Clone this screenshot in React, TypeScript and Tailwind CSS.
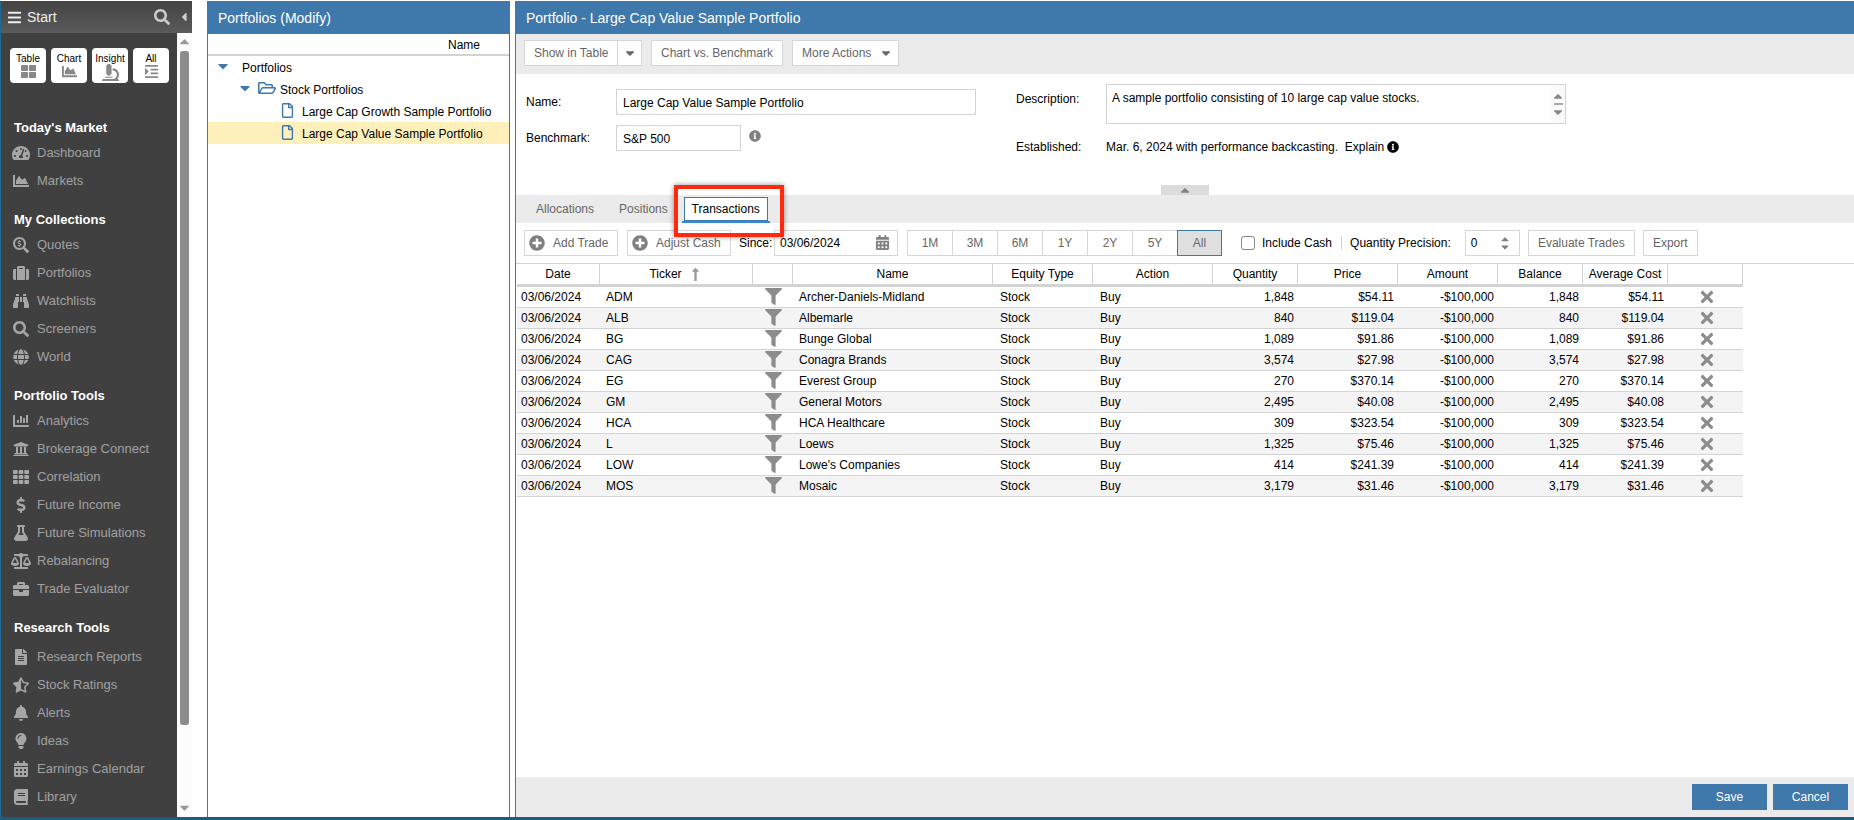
import React from "react";
import {
  FaBars, FaSearch, FaCaretLeft, FaCaretUp, FaCaretDown, FaThLarge, FaChartArea, FaMicroscope, FaIndent,
  FaTachometerAlt, FaSearchDollar, FaSuitcase, FaBinoculars, FaGlobe, FaChartBar, FaUniversity, FaTh,
  FaDollarSign, FaFlask, FaBalanceScale, FaBriefcase, FaFileAlt, FaStarHalfAlt, FaBell, FaLightbulb,
  FaCalendarAlt, FaBook, FaRegFolderOpen, FaRegFile, FaInfoCircle, FaPlusCircle, FaFilter, FaTimes, FaLongArrowAltUp,
} from "react-icons/fa";

const font = { fontFamily: '"Liberation Sans", Arial, sans-serif' };

type Item = { label: string; Icon: React.ComponentType<{ size?: number; className?: string }>; size?: number };
const sections: { title: string; extra?: boolean; items: Item[] }[] = [
  { title: "Today's Market", items: [{ label: "Dashboard", Icon: FaTachometerAlt, size: 18 }, { label: "Markets", Icon: FaChartArea }] },
  {
    title: "My Collections",
    items: [
      { label: "Quotes", Icon: FaSearchDollar },
      { label: "Portfolios", Icon: FaSuitcase },
      { label: "Watchlists", Icon: FaBinoculars },
      { label: "Screeners", Icon: FaSearch },
      { label: "World", Icon: FaGlobe },
    ],
  },
  {
    title: "Portfolio Tools",
    items: [
      { label: "Analytics", Icon: FaChartBar },
      { label: "Brokerage Connect", Icon: FaUniversity },
      { label: "Correlation", Icon: FaTh },
      { label: "Future Income", Icon: FaDollarSign },
      { label: "Future Simulations", Icon: FaFlask },
      { label: "Rebalancing", Icon: FaBalanceScale, size: 20 },
      { label: "Trade Evaluator", Icon: FaBriefcase },
    ],
  },
  {
    title: "Research Tools",
    extra: true,
    items: [
      { label: "Research Reports", Icon: FaFileAlt },
      { label: "Stock Ratings", Icon: FaStarHalfAlt },
      { label: "Alerts", Icon: FaBell },
      { label: "Ideas", Icon: FaLightbulb },
      { label: "Earnings Calendar", Icon: FaCalendarAlt },
      { label: "Library", Icon: FaBook },
    ],
  },
];

const quick: [string, React.ComponentType<{ size?: number; className?: string }>][] = [
  ["Table", FaThLarge],
  ["Chart", FaChartArea],
  ["Insight", FaMicroscope],
  ["All", FaIndent],
];

const rows = [
  ["ADM", "Archer-Daniels-Midland", "1,848", "$54.11"],
  ["ALB", "Albemarle", "840", "$119.04"],
  ["BG", "Bunge Global", "1,089", "$91.86"],
  ["CAG", "Conagra Brands", "3,574", "$27.98"],
  ["EG", "Everest Group", "270", "$370.14"],
  ["GM", "General Motors", "2,495", "$40.08"],
  ["HCA", "HCA Healthcare", "309", "$323.54"],
  ["L", "Loews", "1,325", "$75.46"],
  ["LOW", "Lowe's Companies", "414", "$241.39"],
  ["MOS", "Mosaic", "3,179", "$31.46"],
];

const gridCols = "grid grid-cols-[83px_153px_40px_200px_100px_120px_85px_100px_100px_85px_85px_75px] w-[1226px]";
const headers = ["Date", "Ticker", "", "Name", "Equity Type", "Action", "Quantity", "Price", "Amount", "Balance", "Average Cost", ""];

function Btn({ children, className = "" }: { children: React.ReactNode; className?: string }) {
  return (
    <div className={"h-[26px] border border-[#d6d6d6] bg-white text-[#666] flex items-center shrink-0 " + className}>{children}</div>
  );
}

export default function App() {
  return (
    <div style={font} className="relative w-[1854px] h-[820px] overflow-hidden bg-white text-[12px] text-[#1a1a1a] flex flex-col">
      <div className="flex flex-1 min-h-0 pt-px">
        {/* Sidebar */}
        <div className="w-[192px] shrink-0 flex flex-col border-l border-[#1d6a96]">
          <div className="h-[32px] shrink-0 flex items-center bg-gradient-to-b from-[#444] to-[#5a5a5a] text-white pl-[6px]">
            <FaBars size={15} className="text-[#eee]" />
            <span className="ml-[5px] text-[14px] text-[#eee]">Start</span>
            <FaSearch size={16} className="ml-auto text-[#ccc]" />
            <FaCaretLeft size={14} className="ml-[7px] mr-[1px] text-[#ccc]" />
          </div>
          <div className="flex flex-1 min-h-0">
            <div className="w-[176px] bg-[#404040] flex flex-col">
              <div className="flex gap-[5px] pl-[9px] pt-[15px] h-[70px] shrink-0">
                {quick.map(([label, Icon]) => (
                  <div key={label} className="w-[36px] h-[35px] bg-white rounded-[4px] flex flex-col items-center pt-[6px]">
                    <span className="text-[10px] leading-[10px] text-black">{label}</span>
                    <Icon size={label === "Insight" ? 17 : 15} className="text-[#888]" />
                  </div>
                ))}
              </div>
              {sections.map((s) => (
                <div key={s.title} className="flex flex-col">
                  <div className={"h-[22px] mt-[14px] flex items-center pl-[13px] text-[13px] font-bold text-white " + (s.extra ? "mb-1" : "")}>
                    {s.title}
                  </div>
                  {s.items.map(({ label, Icon, size }) => (
                    <div key={label} className="h-[28px] flex items-center text-[13px] text-[#a0a0a0]">
                      <span className="w-[36px] pl-[4px] flex justify-center shrink-0">
                        <Icon size={size ?? 16} className="text-[#a6a6a6]" />
                      </span>
                      <span>{label}</span>
                    </div>
                  ))}
                </div>
              ))}
            </div>
            <div className="w-[15px] bg-[#fcfcfc] flex flex-col items-center">
              <FaCaretUp size={15} className="text-[#999] mt-[1px]" />
              <div className="w-[9px] h-[674px] mt-[2px] rounded-[3px] bg-[#8c8c8c]" />
              <div className="flex-1" />
              <FaCaretDown size={15} className="text-[#999] mb-[2px]" />
            </div>
          </div>
        </div>

        <div className="w-[15px] shrink-0" />

        {/* Tree panel */}
        <div className="w-[303px] shrink-0 flex flex-col border-x border-[#3f78ab]">
          <div className="h-[33px] -mx-px bg-[#3f78ab] text-white text-[14px] flex items-center pl-[11px] pt-px shrink-0">Portfolios (Modify)</div>
          <div className="h-[22px] border-b-2 border-[#d3d3d3] flex items-center justify-end pr-[29px] pt-px text-black shrink-0">Name</div>
          <div className="h-[22px] flex items-center text-black">
            <FaCaretDown size={16} className="ml-[7px] -mt-[2px] text-[#3f78ab]" />
            <span className="ml-[11px] pt-px">Portfolios</span>
          </div>
          <div className="h-[22px] flex items-center text-black">
            <FaCaretDown size={16} className="ml-[29px] -mt-[2px] text-[#3f78ab]" />
            <FaRegFolderOpen size={18} className="ml-[5px] text-[#3f78ab] -mt-[2px]" />
            <span className="ml-[4px] pt-px">Stock Portfolios</span>
          </div>
          <div className="h-[22px] flex items-center text-black">
            <FaRegFile size={15} className="ml-[72px] text-[#3f78ab] -mt-[2px]" />
            <span className="ml-[7px] pt-px">Large Cap Growth Sample Portfolio</span>
          </div>
          <div className="h-[22px] flex items-center text-black bg-[#fef0bb]">
            <FaRegFile size={15} className="ml-[72px] text-[#3f78ab] -mt-[2px]" />
            <span className="ml-[7px] pt-px">Large Cap Value Sample Portfolio</span>
          </div>
        </div>

        <div className="w-[5px] shrink-0" />

        {/* Main */}
        <div className="flex-1 min-w-0 flex flex-col border-l border-[#3f78ab]">
          <div className="h-[33px] -ml-px bg-[#3f78ab] text-white text-[14px] flex items-center pl-[11px] pt-px shrink-0">
            Portfolio - Large Cap Value Sample Portfolio
          </div>
          <div className="h-[40px] bg-[#ebebeb] flex items-center gap-[9px] pl-[8px] pb-[2px] shrink-0">
            <Btn className="w-[118px]">
              <span className="w-[93px] pl-[9px] border-r border-[#d6d6d6] h-full flex items-center">Show in Table</span>
              <FaCaretDown size={14} className="ml-[5px] text-[#666]" />
            </Btn>
            <Btn className="w-[132px] justify-center">Chart vs. Benchmark</Btn>
            <Btn className="w-[107px] pl-[9px]">
              More Actions
              <FaCaretDown size={14} className="ml-[8px] text-[#666]" />
            </Btn>
          </div>

          <div className="h-[121px] shrink-0 flex flex-col text-black">
            <div className="flex flex-1 pl-[10px]">
              <div className="w-[490px] pt-[15px] flex flex-col gap-[10px]">
                <div className="flex items-center h-[26px]">
                  <span className="w-[90px]">Name:</span>
                  <div className="w-[360px] h-[26px] border border-[#d3d3d3] flex items-center pl-[6px] pt-px">Large Cap Value Sample Portfolio</div>
                </div>
                <div className="flex items-center h-[26px]">
                  <span className="w-[90px]">Benchmark:</span>
                  <div className="w-[125px] h-[26px] border border-[#d3d3d3] flex items-center pl-[6px] pt-px">S&amp;P 500</div>
                  <FaInfoCircle size={12} className="ml-[8px] -mt-[4px] text-[#808080]" />
                </div>
              </div>
              <div className="pt-[10px] flex flex-col">
                <div className="flex">
                  <span className="w-[90px] pt-[6px]">Description:</span>
                  <div className="w-[460px] h-[40px] border border-[#d3d3d3] flex justify-between pl-[5px] pt-[4px]">
                    <span>A sample portfolio consisting of 10 large cap value stocks.</span>
                    <div className="w-[14px] -mt-[4px] flex flex-col items-center justify-center gap-[1px] text-[#888] bg-[#fafafa]">
                      <FaCaretUp size={14} className="-my-[1px]" />
                      <div className="w-[9px] h-[2px] bg-[#aaa]" />
                      <FaCaretDown size={14} className="-my-[1px]" />
                    </div>
                  </div>
                </div>
                <div className="flex h-[20px] items-center mt-[13px]">
                  <span className="w-[90px]">Established:</span>
                  <span className="whitespace-pre">Mar. 6, 2024 with performance backcasting.  Explain</span>
                  <FaInfoCircle size={12} className="ml-[3px] text-black" />
                </div>
              </div>
            </div>
            <div className="h-[10px] w-[48px] ml-[645px] bg-[#dcdcdc] flex items-center justify-center shrink-0">
              <FaCaretUp size={14} className="text-[#808080]" />
            </div>
          </div>

          <div className="h-[28px] bg-[#ebebeb] flex items-start pl-[20px] shrink-0 text-[#666]">
            <span className="leading-[28px]">Allocations</span>
            <span className="leading-[28px] ml-[25px]">Positions</span>
            <div className="ml-[14px] w-[88px] h-[28px] border-b-2 border-[#2f8ae0] pt-[2px] px-[2px]">
              <div className="w-[84px] h-[24px] border border-[#3f78ab] bg-white text-black flex items-center justify-center">Transactions</div>
            </div>
          </div>

          <div className="h-[40px] flex items-center pl-[8px] shrink-0 pb-[1px]">
            <Btn className="w-[94px] pl-[4px]">
              <FaPlusCircle size={16} className="text-[#808080]" />
              <span className="ml-[8px]">Add Trade</span>
            </Btn>
            <Btn className="w-[104px] pl-[4px] ml-[9px]">
              <FaPlusCircle size={16} className="text-[#808080]" />
              <span className="ml-[8px]">Adjust Cash</span>
            </Btn>
            <span className="ml-[8px] w-[35px] text-black">Since:</span>
            <Btn className="w-[124px] pl-[5px] pr-[7px] justify-between !text-black">
              03/06/2024
              <FaCalendarAlt size={15} className="text-[#808080]" />
            </Btn>
            <div className="flex ml-[9px]">
              {["1M", "3M", "6M", "1Y", "2Y", "5Y"].map((t) => (
                <Btn key={t} className="w-[46px] justify-center -mr-px">{t}</Btn>
              ))}
              <div className="w-[45px] h-[26px] border border-[#3f78ab] bg-[#e0e0e0] text-[#666] flex items-center justify-center">All</div>
            </div>
            <div className="ml-[19px] w-[14px] h-[14px] rounded-[3px] border border-[#888] bg-white shrink-0" />
            <span className="ml-[7px] text-black">Include Cash</span>
            <div className="ml-[9px] w-px h-[14px] bg-[#d3d3d3]" />
            <span className="ml-[8px] text-black">Quantity Precision:</span>
            <Btn className="w-[55px] ml-[14px] pl-[5px] justify-between !text-black">
              0
              <span className="flex flex-col pr-[8px] text-[#808080]">
                <FaCaretUp size={12} className="-mb-[2px]" />
                <FaCaretDown size={12} className="-mt-[2px]" />
              </span>
            </Btn>
            <Btn className="w-[107px] ml-[8px] justify-center">Evaluate Trades</Btn>
            <Btn className="w-[55px] ml-[8px] justify-center">Export</Btn>
          </div>

          <div className="border-t border-[#d3d3d3] shrink-0">
            <div className={gridCols + " ml-px h-[20px] box-content border-b-[3px] border-[#d3d3d3]"}>
              {headers.map((h, i) => (
                <div key={i} className="h-[20px] border-r border-[#d3d3d3] flex items-center justify-center text-black">
                  {h}
                  {h === "Ticker" && <FaLongArrowAltUp size={15} className="ml-[6px] text-[#999]" />}
                </div>
              ))}
            </div>
          </div>
          <div className="ml-px w-[1226px] shrink-0">
            {rows.map((r, i) => (
              <div key={r[0]} className={gridCols + " h-[21px] border-b border-[#d3d3d3] items-center text-black " + (i % 2 ? "bg-[#f4f4f4]" : "bg-white")}>
                <span className="pl-[4px]">03/06/2024</span>
                <span className="pl-[6px]">{r[0]}</span>
                <span className="flex justify-center"><FaFilter size={17} className="text-[#8c8c8c] -mt-[1px]" /></span>
                <span className="pl-[6px]">{r[1]}</span>
                <span className="pl-[7px]">Stock</span>
                <span className="pl-[7px]">Buy</span>
                <span className="text-right pr-[4px]">{r[2]}</span>
                <span className="text-right pr-[4px]">{r[3]}</span>
                <span className="text-right pr-[4px]">-$100,000</span>
                <span className="text-right pr-[4px]">{r[2]}</span>
                <span className="text-right pr-[4px]">{r[3]}</span>
                <span className="flex justify-center pl-[3px]"><FaTimes size={18} className="text-[#8c8c8c]" /></span>
              </div>
            ))}
          </div>
          <div className="flex-1" />
          <div className="h-[40px] bg-[#ebebeb] flex items-center justify-end gap-[6px] pr-[6px] shrink-0">
            <div className="w-[75px] h-[26px] bg-[#3f78ab] text-white flex items-center justify-center">Save</div>
            <div className="w-[75px] h-[26px] bg-[#3f78ab] text-white flex items-center justify-center">Cancel</div>
          </div>
        </div>
      </div>
      <div className="h-[3px] bg-[#1d5c80] shrink-0" />

      {/* Red annotation around the Transactions tab */}
      <div className="absolute left-[674px] top-[185px] w-[110px] h-[52px] border-4 border-[#ff2a0d] shadow-[0_0_5px_rgba(0,0,0,0.45)]" />
    </div>
  );
}
